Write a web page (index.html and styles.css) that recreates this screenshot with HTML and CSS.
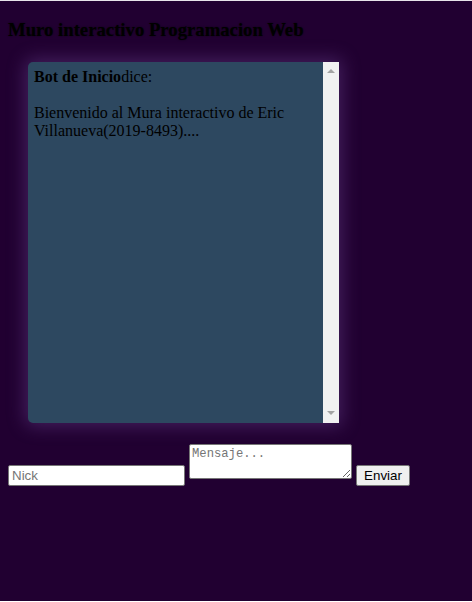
FILE: index.html
```html
<!DOCTYPE html>
<html lang="es">
<head>
<meta charset="utf-8">
<title>Muro interactivo</title>
<link rel="stylesheet" href="styles.css">
</head>
<body>
<h3 class="title">Muro interactivo Programacion Web</h3>
<div class="chat">
  <div class="messages">
    <div class="msg"><b>Bot de Inicio</b>dice:
      <p>Bienvenido al Mura interactivo de Eric Villanueva(2019-8493)....</p>
    </div>
  </div>
  <div class="scrollbar">
    <span class="arrow up"></span>
    <span class="arrow down"></span>
  </div>
</div>
<form class="form">
  <input class="nick" type="text" placeholder="Nick">
  <textarea class="text" placeholder="Mensaje..."></textarea>
  <button class="send" type="button">Enviar</button>
</form>
</body>
</html>
```

FILE: styles.css
```css
html {
  background: #ffffff;
  height: 100%;
}
body {
  margin: 0;
  border-top: 1px solid #e8e4ea;
  background: #210031;
  min-height: 601px;
  box-sizing: border-box;
  padding: 0 8px;
  font-family: "Liberation Serif", "Times New Roman", serif;
  font-size: 16px;
  color: #000;
}
.title {
  margin: 0;
  padding-top: 18px;
  font-size: 18.72px;
  font-weight: bold;
  line-height: 21px;
  color: #000;
  text-shadow: 0 0 2px rgba(0,0,0,0.6);
}
.chat {
  margin: 22px 0 0 20px;
  width: 311px;
  height: 361px;
  display: flex;
  background: #2d4860;
  border-radius: 5px 0 0 5px;
  overflow: hidden;
  box-shadow: 0 0 18px 3px rgba(110, 70, 150, 0.45);
}
.messages {
  flex: 1;
  padding: 6px 6px;
  line-height: 18px;
}
.msg p {
  margin: 18px 0 0;
}
.scrollbar {
  width: 16px;
  background: #f1f1f1;
  display: flex;
  flex-direction: column;
  justify-content: space-between;
  align-items: center;
  padding: 7px 0 8px;
  box-sizing: border-box;
}
.arrow {
  width: 0;
  height: 0;
  border-left: 4px solid transparent;
  border-right: 4px solid transparent;
}
.arrow.up {
  border-bottom: 4px solid #a3a3a3;
}
.arrow.down {
  border-top: 4px solid #a3a3a3;
}
.form {
  margin-top: 21px;
  display: flex;
  align-items: flex-end;
}
.nick {
  width: 177px;
  height: 21px;
  box-sizing: border-box;
  margin: 0;
  padding: 1px 3px;
  border: 1px solid #767676;
  border-radius: 2px;
  background: #fff;
  font-family: "Liberation Sans", Arial, sans-serif;
  font-size: 13.33px;
}
.nick::placeholder {
  color: #757575;
}
.text {
  width: 163px;
  height: 35px;
  box-sizing: border-box;
  margin: 0 4px 7px 4px;
  padding: 2px;
  border: 1px solid #767676;
  border-radius: 2px;
  background: #fff;
  font-family: "Liberation Mono", "Courier New", monospace;
  font-size: 12.2px;
  line-height: 15px;
}
.text::placeholder {
  color: #757575;
}
.send {
  width: 54px;
  height: 21px;
  box-sizing: border-box;
  margin: 0;
  padding: 1px 6px;
  border: 1px solid #767676;
  border-radius: 2px;
  background: #efefef;
  color: #000;
  font-family: "Liberation Sans", Arial, sans-serif;
  font-size: 13.33px;
}
```
